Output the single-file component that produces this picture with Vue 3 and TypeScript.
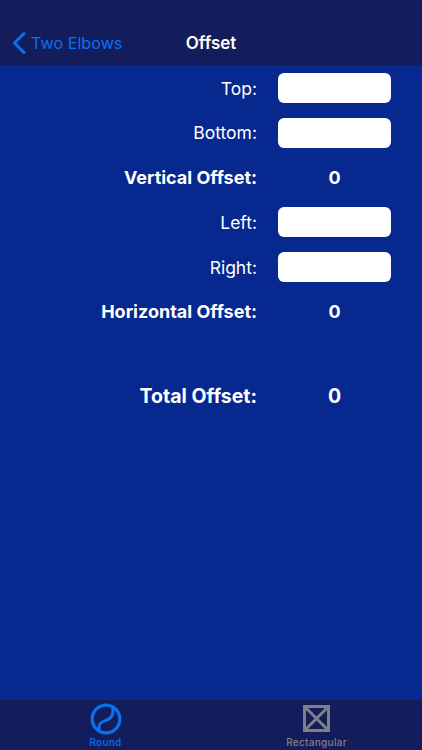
<script setup lang="ts">
interface Row { label: string; kind: 'input' | 'value' }
const rows: Row[] = [
  { label: 'Top:', kind: 'input' },
  { label: 'Bottom:', kind: 'input' },
  { label: 'Vertical Offset:', kind: 'value' },
  { label: 'Left:', kind: 'input' },
  { label: 'Right:', kind: 'input' },
  { label: 'Horizontal Offset:', kind: 'value' },
]
</script>

<template>
  <div class="screen">
    <header class="nav">
      <div class="back">
        <svg class="chev" width="14" height="24" viewBox="0 0 14 24" fill="none">
          <path d="M12 2.5 L2.5 12 L12 21.5" stroke="#0a70f0" stroke-width="3" stroke-linecap="round" stroke-linejoin="round" />
        </svg>
        <span>Two Elbows</span>
      </div>
      <div class="title">Offset</div>
    </header>

    <main class="content">
      <div v-for="r in rows" :key="r.label" class="row">
        <div class="label" :class="{ bold: r.kind === 'value' }">{{ r.label }}</div>
        <div v-if="r.kind === 'input'" class="field"></div>
        <div v-else class="value">0</div>
      </div>
      <div class="row total">
        <div class="label bold">Total Offset:</div>
        <div class="value">0</div>
      </div>
    </main>

    <footer class="tabs">
      <div class="tab active">
        <svg width="32" height="32" viewBox="0 0 32 32" fill="none">
          <circle cx="16" cy="16" r="13.8" stroke="#0a70f0" stroke-width="3.2" />
          <path d="M9.5 28 C7.5 20.5 11.5 18.8 16 17.3 C20.5 15.8 24.5 12.5 22.5 4" stroke="#0a70f0" stroke-width="3" />
        </svg>
        <span>Round</span>
      </div>
      <div class="tab">
        <svg width="28" height="28" viewBox="0 0 28 28" fill="none">
          <rect x="1.5" y="1.5" width="24" height="24" stroke="#7f7f86" stroke-width="3" />
          <path d="M2 2 L25 25 M25 2 L2 25" stroke="#7f7f86" stroke-width="3" />
        </svg>
        <span>Rectangular</span>
      </div>
    </footer>
  </div>
</template>

<style scoped>
.screen {
  width: 422px;
  height: 750px;
  display: flex;
  flex-direction: column;
  background: #07288f;
  font-family: Inter, "Liberation Sans", sans-serif;
  color: #fff;
  overflow: hidden;
}
.nav {
  height: 66px;
  flex: none;
  position: relative;
  display: flex;
  align-items: flex-end;
  justify-content: center;
  box-sizing: border-box;
  padding-bottom: 11px;
  background: #141d5c;
  border-bottom: 1px solid #10246f;
}
.back {
  position: absolute;
  left: 12px;
  bottom: 10px;
  display: flex;
  align-items: center;
  gap: 5px;
  color: #0a70f0;
  font-size: 16.2px;
  line-height: 24px;
}
.title {
  font-size: 17px;
  font-weight: 600;
  line-height: 22px;
}
.content {
  flex: 1;
  padding-top: 7px;
}
.row {
  height: 30px;
  margin-bottom: 14.8px;
  display: flex;
  align-items: center;
}
.label {
  width: 257px;
  text-align: right;
  font-size: 17.5px;
}
.label.bold {
  font-size: 18px;
  font-weight: 700;
}
.field {
  margin-left: 21px;
  width: 113px;
  height: 30px;
  border-radius: 6px;
  background: #fff;
}
.value {
  margin-left: 21px;
  width: 113px;
  text-align: center;
  font-size: 18px;
  font-weight: 700;
}
.total {
  margin-top: 54px;
}
.total .label,
.total .value {
  font-size: 19.5px;
}
.tabs {
  height: 51px;
  flex: none;
  display: flex;
  box-sizing: border-box;
  background: #141d5c;
  border-top: 1px solid #10246f;
}
.tab {
  flex: 1;
  display: flex;
  flex-direction: column;
  align-items: center;
  padding-top: 3px;
  color: #7f7f86;
  font-size: 10px;
  font-weight: 500;
  line-height: 12px;
  letter-spacing: 0.3px;
}
.tab svg {
  height: 32px;
  flex: none;
  margin-bottom: 1px;
}
.tab.active {
  color: #0a70f0;
}
</style>
